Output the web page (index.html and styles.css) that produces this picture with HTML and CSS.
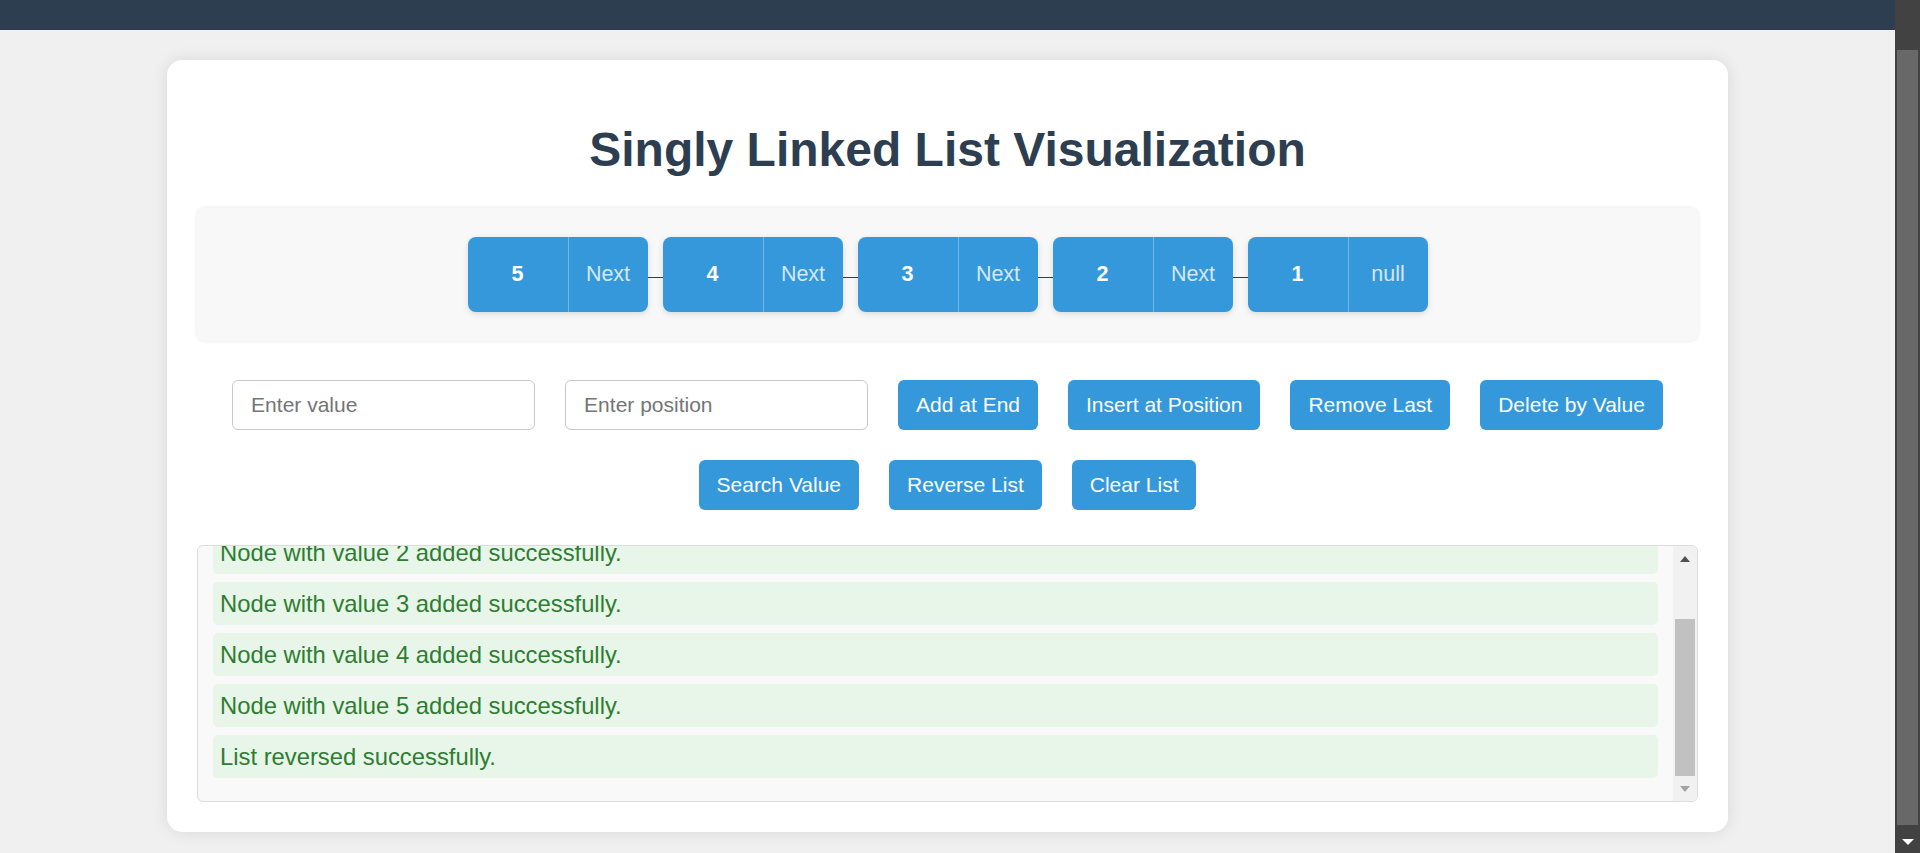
FILE: index.html
```html
<!DOCTYPE html>
<html lang="en">
<head>
<meta charset="utf-8">
<title>Singly Linked List Visualization</title>
<link rel="stylesheet" href="styles.css">
</head>
<body>
<div class="page">
  <div class="topbar"></div>
  <main class="container">
    <h1 class="title">Singly Linked List Visualization</h1>
    <section class="viz">
      <div class="node"><span class="node-data">5</span><span class="node-next">Next</span></div>
      <div class="link"></div>
      <div class="node"><span class="node-data">4</span><span class="node-next">Next</span></div>
      <div class="link"></div>
      <div class="node"><span class="node-data">3</span><span class="node-next">Next</span></div>
      <div class="link"></div>
      <div class="node"><span class="node-data">2</span><span class="node-next">Next</span></div>
      <div class="link"></div>
      <div class="node"><span class="node-data">1</span><span class="node-next">null</span></div>
    </section>
    <section class="controls">
      <input class="field" type="text" placeholder="Enter value">
      <input class="field" type="text" placeholder="Enter position">
      <button class="btn">Add at End</button>
      <button class="btn">Insert at Position</button>
      <button class="btn">Remove Last</button>
      <button class="btn">Delete by Value</button>
      <button class="btn">Search Value</button>
      <button class="btn">Reverse List</button>
      <button class="btn">Clear List</button>
    </section>
    <section class="log">
      <div class="log-list">
        <div class="log-item">Node with value 1 added successfully.</div>
        <div class="log-item">Node with value 2 added successfully.</div>
        <div class="log-item">Node with value 3 added successfully.</div>
        <div class="log-item">Node with value 4 added successfully.</div>
        <div class="log-item">Node with value 5 added successfully.</div>
        <div class="log-item">List reversed successfully.</div>
      </div>
      <div class="log-bar">
        <div class="log-btn"><span class="tri-up"></span></div>
        <div class="log-track"><div class="log-thumb"></div></div>
        <div class="log-btn"><span class="tri-down-grey"></span></div>
      </div>
    </section>
  </main>
</div>
<div class="page-bar">
  <div class="page-track"><div class="page-thumb"></div></div>
  <div class="page-btn"><span class="tri-down-white"></span></div>
</div>
</body>
</html>
```

FILE: styles.css
```css
body {
  margin: 0;
  display: flex;
  height: 853px;
  overflow: hidden;
  background: #f0f0f0;
  font-family: "Liberation Sans", Arial, sans-serif;
}

.page {
  flex: 1;
  min-width: 0;
}

.topbar {
  height: 30px;
  background: #2c3e50;
}

.page-bar {
  width: 25px;
  height: 853px;
  flex-shrink: 0;
  display: flex;
  flex-direction: column;
  background: #424242;
}

.page-track {
  flex: 1;
  display: flex;
  flex-direction: column;
  justify-content: flex-end;
}

.page-thumb {
  height: 775px;
  margin: 0 2px;
  background: #686868;
}

.page-btn {
  height: 28px;
  display: flex;
  align-items: center;
  justify-content: center;
}

.tri-down-white {
  width: 0;
  height: 0;
  margin-top: 6px;
  border-left: 6px solid transparent;
  border-right: 6px solid transparent;
  border-top: 6px solid #ffffff;
}

.container {
  box-sizing: border-box;
  width: 1561px;
  margin: 30px auto 0;
  padding: 30px;
  background: #ffffff;
  border-radius: 15px;
  box-shadow: 0 0 16px rgba(0, 0, 0, 0.1);
}

.title {
  margin: 32px 0 31px;
  font-size: 48px;
  font-weight: bold;
  line-height: 55px;
  color: #2c3e50;
  text-align: center;
}

.viz {
  display: flex;
  align-items: center;
  justify-content: center;
  padding: 29px 0;
  background: #f8f8f8;
  border-radius: 8px;
  box-shadow: 0 0 4px rgba(0, 0, 0, 0.1);
}

.node {
  display: flex;
  height: 75px;
  background: #3498db;
  border-radius: 8px;
  box-shadow: 0 2px 6px rgba(0, 0, 0, 0.12);
  color: #ffffff;
  font-size: 21.5px;
}

.node-data {
  box-sizing: border-box;
  width: 101px;
  display: flex;
  align-items: center;
  justify-content: center;
  font-weight: bold;
  border-right: 1px solid rgba(255, 255, 255, 0.3);
}

.node-next {
  width: 79px;
  display: flex;
  align-items: center;
  justify-content: center;
  color: rgba(255, 255, 255, 0.8);
}

.link {
  width: 15px;
  height: 1px;
  margin-top: 6px;
  background: #2c3e50;
}

.controls {
  display: flex;
  flex-wrap: wrap;
  justify-content: center;
  gap: 30px;
  margin-top: 39px;
}

.field {
  box-sizing: border-box;
  width: 303px;
  height: 50px;
  margin: 0;
  padding: 0 18px;
  border: 1px solid #c8c8c8;
  border-radius: 6px;
  font-family: "Liberation Sans", Arial, sans-serif;
  font-size: 21px;
  color: #333333;
  background: #ffffff;
}

.field::placeholder {
  color: #757575;
}

.btn {
  height: 50px;
  margin: 0;
  padding: 0 18px;
  border: none;
  border-radius: 6px;
  background: #3498db;
  color: #ffffff;
  font-family: "Liberation Sans", Arial, sans-serif;
  font-size: 21px;
}

.log {
  box-sizing: border-box;
  height: 257px;
  margin-top: 35px;
  display: flex;
  overflow: hidden;
  background: #f9f9f9;
  border: 1px solid #dddddd;
  border-radius: 6px;
}

.log-list {
  flex: 1;
  min-width: 0;
  display: flex;
  flex-direction: column;
  justify-content: flex-end;
  padding: 15px;
  overflow: hidden;
}

.log-item {
  flex-shrink: 0;
  margin-bottom: 8px;
  padding: 7.5px 7px;
  background: #e8f5e9;
  border-radius: 5px;
  color: #2e7d32;
  font-size: 23.8px;
}

.log-bar {
  width: 24px;
  flex-shrink: 0;
  display: flex;
  flex-direction: column;
  background: #f1f1f1;
}

.log-btn {
  height: 25px;
  display: flex;
  align-items: center;
  justify-content: center;
}

.log-track {
  flex: 1;
  display: flex;
  flex-direction: column;
  justify-content: flex-end;
}

.log-thumb {
  height: 157px;
  margin: 0 2px;
  background: #c1c1c1;
}

.tri-up {
  width: 0;
  height: 0;
  border-left: 5.5px solid transparent;
  border-right: 5.5px solid transparent;
  border-bottom: 6px solid #505050;
}

.tri-down-grey {
  width: 0;
  height: 0;
  border-left: 5.5px solid transparent;
  border-right: 5.5px solid transparent;
  border-top: 6px solid #a3a3a3;
}
```
